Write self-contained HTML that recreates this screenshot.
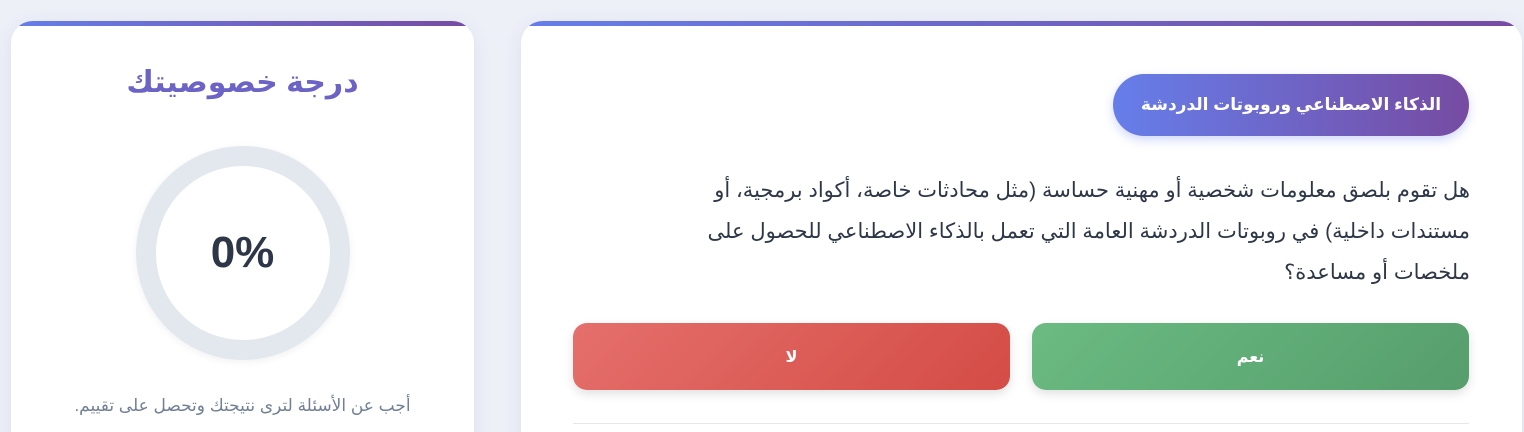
<!DOCTYPE html>
<html lang="ar" dir="rtl"><head><meta charset="utf-8"><style>
*{box-sizing:border-box;margin:0;padding:0}
html,body{width:1524px;height:432px;overflow:hidden}
body{background:#eef0f8;font-family:"Liberation Sans","DejaVu Sans",sans-serif}
#w{position:relative;width:1524px;height:432px;overflow:hidden}
.card{position:absolute;background:#fff;border-radius:22px;overflow:hidden;box-shadow:0 4px 18px rgba(90,100,160,.12)}
.card:before{content:"";position:absolute;left:0;right:0;top:0;height:5px;background:linear-gradient(90deg,#667eea,#764ba2)}
#l{left:11px;top:21px;width:463px;height:440px}
#r{left:521px;top:21px;width:1001px;height:440px}
h2{position:absolute;top:44px;left:0;right:0;text-align:center;font-size:30px;font-weight:bold;color:#6b63c6}
.ring{position:absolute;left:125px;top:125px;width:214px;height:214px;border-radius:50%;border:20px solid #e3e8ef;box-shadow:0 2px 8px rgba(0,0,0,.06)}
.pct{position:absolute;left:0;right:0;top:207px;text-align:center;font-size:44px;font-weight:bold;color:#2d3748;direction:ltr}
.cap{position:absolute;left:0;right:0;top:375px;text-align:center;font-size:17px;color:#718096}
.badge{position:absolute;right:53px;top:53px;width:356px;height:62px;border-radius:31px;background:linear-gradient(90deg,#667eea,#764ba2);color:#fff;font-weight:bold;font-size:17px;display:flex;align-items:center;justify-content:center;box-shadow:0 4px 10px rgba(102,126,234,.3)}
.q{position:absolute;right:52px;left:135px;top:149px;font-size:21px;line-height:41px;color:#2d3748}
.btn{position:absolute;top:302px;width:437px;height:67px;border-radius:14px;color:#fff;font-weight:bold;font-size:16px;display:flex;align-items:center;justify-content:center;box-shadow:0 4px 10px rgba(0,0,0,.12)}
.yes{right:53px;background:linear-gradient(135deg,#6bbb82,#569e6c)}
.no{left:52px;background:linear-gradient(135deg,#e56f6c,#d44c45)}
.hr{position:absolute;left:52px;right:53px;top:402px;height:1px;background:#e2e8f0}
</style></head><body><div id="w">
<div class="card" id="l">
<h2>درجة خصوصيتك</h2>
<div class="ring"></div>
<div class="pct">0%</div>
<div class="cap">أجب عن الأسئلة لترى نتيجتك وتحصل على تقييم.</div>
</div>
<div class="card" id="r">
<div class="badge">الذكاء الاصطناعي وروبوتات الدردشة</div>
<div class="q">هل تقوم بلصق معلومات شخصية أو مهنية حساسة (مثل محادثات خاصة، أكواد برمجية، أو مستندات داخلية) في روبوتات الدردشة العامة التي تعمل بالذكاء الاصطناعي للحصول على ملخصات أو مساعدة؟</div>
<div class="btn yes">نعم</div>
<div class="btn no">لا</div>
<div class="hr"></div>
</div>
</div></body></html>
